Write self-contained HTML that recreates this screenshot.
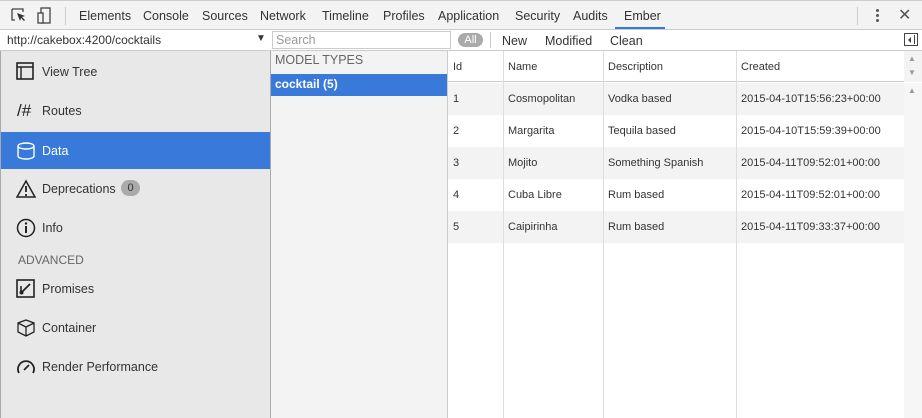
<!DOCTYPE html>
<html><head><style>
*{box-sizing:border-box;margin:0;padding:0}
body{width:922px;height:418px;overflow:hidden;font-family:"Liberation Sans",sans-serif;font-size:12px;color:#333;background:#fff;position:relative}
.abs{position:absolute}
#tabs{left:0;top:0;width:922px;height:30px;background:#f3f3f3;border-top:1px solid #ccc;border-bottom:1px solid #ccc}
#tabs span{position:absolute;top:8px;font-size:12.5px;color:#333}
#bar2{left:0;top:30px;width:922px;height:21px;border-bottom:1px solid #ccc;background:#fff}
#side{left:0;top:51px;width:271px;height:367px;background:#e8e8e8;border-left:1px solid #aaa;border-right:1px solid #aaa}
.nav{position:absolute;left:0;width:269px;height:37px;font-size:12.5px;color:#333}
.nav .t{position:absolute;left:41px;top:12px}
.nav svg{position:absolute;left:15px;top:9px}
#mid{left:271px;top:51px;width:177px;height:367px;background:#f3f3f3;border-right:1px solid #ccc}
#tbl{left:448px;top:51px;width:456px;height:367px;background:#fff}
.row{position:absolute;left:0;width:456px;height:32px}
.row span{position:absolute;top:10px;font-size:11px}
.vl{position:absolute;top:0;width:1px;height:367px;background:#ddd}
</style></head><body>
<div id="tabs" class="abs">
<svg class="abs" style="left:11px;top:7px" width="16" height="15" viewBox="0 0 16 15"><path d="M1 1h11v3M1 1v11h3" fill="none" stroke="#444" stroke-width="1.3"/><path d="M6 5l8 3-3 1 3 3-1 1-3-3-1 3z" fill="#333"/></svg>
<svg class="abs" style="left:37px;top:6px" width="14" height="17" viewBox="0 0 14 17"><rect x="4" y="1" width="9" height="15" fill="none" stroke="#444" stroke-width="1.3"/><rect x="1" y="6" width="5" height="10" fill="#f3f3f3" stroke="#444" stroke-width="1.3"/></svg>
<div class="abs" style="left:65px;top:6px;width:1px;height:18px;background:#ccc"></div>
<span style="left:79px">Elements</span><span style="left:143px">Console</span><span style="left:202px">Sources</span><span style="left:260px">Network</span><span style="left:322px">Timeline</span><span style="left:383px">Profiles</span><span style="left:438px">Application</span><span style="left:515px">Security</span><span style="left:573px">Audits</span><span style="left:624px">Ember</span>
<div class="abs" style="left:615px;top:26px;width:50px;height:2px;background:#3879d9"></div>
<div class="abs" style="left:857px;top:6px;width:1px;height:18px;background:#ccc"></div>
<div class="abs" style="left:876px;top:8px;width:3px;height:3px;background:#555;border-radius:50%;box-shadow:0 5px #555,0 10px #555"></div>
<span style="left:898px;top:4px;font-size:16px;color:#555">✕</span>
</div>
<div id="bar2" class="abs">
<span class="abs" style="left:7px;top:3px;font-size:12px">http://cakebox:4200/cocktails</span>
<span class="abs" style="left:256px;top:3px;font-size:10px">▼</span>
<div class="abs" style="left:272px;top:1px;width:179px;height:18px;border:1px solid #ccc;background:#fff"><span style="position:absolute;left:3px;top:1px;color:#999;font-size:12.5px">Search</span></div>
<div class="abs" style="left:458px;top:3px;width:25px;height:14px;border-radius:7px;background:#aaa;color:#fff;font-size:11px;text-align:center;line-height:14px">All</div>
<div class="abs" style="left:490px;top:2px;width:1px;height:16px;background:#ccc"></div>
<span class="abs" style="left:502px;top:4px;font-size:12.5px">New</span>
<span class="abs" style="left:545px;top:4px;font-size:12.5px">Modified</span>
<span class="abs" style="left:610px;top:4px;font-size:12.5px">Clean</span>
<div class="abs" style="left:904px;top:3px;width:14px;height:13px;border:1px solid #444"><div style="position:absolute;right:2px;top:1px;width:1px;height:9px;background:#444"></div><div style="position:absolute;left:3px;top:3px;border:3px solid transparent;border-right-color:#444;border-left:0"></div></div>
</div>
<div id="side" class="abs">
<div class="nav" style="top:2px"><svg width="18" height="18"><rect x="1" y="1" width="16" height="16" fill="none" stroke="#222" stroke-width="1.6"/><path d="M1 5h16M5 5v12" stroke="#222" stroke-width="1.4"/></svg><span class="t">View Tree</span></div>
<div class="nav" style="top:41px"><span style="position:absolute;left:16px;top:9px;font-size:17px;color:#222">/#</span><span class="t">Routes</span></div>
<div class="nav" style="top:81px;background:#3879d9;color:#fff"><svg width="20" height="20"><ellipse cx="10" cy="5" rx="8" ry="3" fill="none" stroke="#fff" stroke-width="1.4"/><path d="M2 5v10a8 3 0 0 0 16 0V5" fill="none" stroke="#fff" stroke-width="1.4"/></svg><span class="t">Data</span></div>
<div class="nav" style="top:119px"><svg width="20" height="20"><path d="M10 2L1 18h18z" fill="none" stroke="#222" stroke-width="1.5"/><path d="M10 7v6M10 15v2" stroke="#222" stroke-width="1.8"/></svg><span class="t">Deprecations</span><span style="position:absolute;left:120px;top:10px;width:19px;height:16px;border-radius:8px;background:#aaa;text-align:center;line-height:16px;font-size:11px;color:#333">0</span></div>
<div class="nav" style="top:158px"><svg width="20" height="20"><circle cx="10" cy="10" r="8.5" fill="none" stroke="#222" stroke-width="1.5"/><path d="M10 8v7" stroke="#222" stroke-width="2"/><circle cx="10" cy="5.5" r="1.2" fill="#222"/></svg><span class="t">Info</span></div>
<span style="position:absolute;left:17px;top:202px;color:#666;font-size:12px">ADVANCED</span>
<div class="nav" style="top:219px"><svg width="20" height="20"><rect x="1" y="1" width="17" height="17" fill="none" stroke="#222" stroke-width="1.6"/><path d="M5 14l9-9" stroke="#222" stroke-width="1.8"/><path d="M5 7v7" stroke="#222" stroke-width="1.6"/><circle cx="5.5" cy="13.5" r="2" fill="#222"/></svg><span class="t">Promises</span></div>
<div class="nav" style="top:258px"><svg width="20" height="20"><path d="M10 2l8 3v9l-8 4-8-4V5z M2 5l8 4 8-4 M10 9v9" fill="none" stroke="#222" stroke-width="1.3"/></svg><span class="t">Container</span></div>
<div class="nav" style="top:297px"><svg width="20" height="20"><path d="M3 16A8 8 0 1 1 17 16" fill="none" stroke="#222" stroke-width="1.8"/><path d="M8 13l5-5" stroke="#222" stroke-width="1.8"/></svg><span class="t">Render Performance</span></div>
</div>
<div id="mid" class="abs">
<span style="position:absolute;left:4px;top:2px;color:#666;font-size:12.5px">MODEL TYPES</span>
<div style="position:absolute;left:0;top:23px;width:176px;height:22px;background:#3879d9;color:#fff;font-weight:bold;font-size:12px;padding:3px 0 0 4px">cocktail (5)</div>
</div>
<div id="tbl" class="abs">
<div class="row" style="top:0;height:31px;border-bottom:1px solid #ccc"><span style="left:5px;top:10px">Id</span><span style="left:60px;top:10px">Name</span><span style="left:160px;top:10px">Description</span><span style="left:293px;top:10px">Created</span></div>
<div class="row" style="top:32px;background:#f3f3f3"><span style="left:5px">1</span><span style="left:60px">Cosmopolitan</span><span style="left:160px">Vodka based</span><span style="left:293px">2015-04-10T15:56:23+00:00</span></div>
<div class="row" style="top:64px"><span style="left:5px">2</span><span style="left:60px">Margarita</span><span style="left:160px">Tequila based</span><span style="left:293px">2015-04-10T15:59:39+00:00</span></div>
<div class="row" style="top:96px;background:#f3f3f3"><span style="left:5px">3</span><span style="left:60px">Mojito</span><span style="left:160px">Something Spanish</span><span style="left:293px">2015-04-11T09:52:01+00:00</span></div>
<div class="row" style="top:128px"><span style="left:5px">4</span><span style="left:60px">Cuba Libre</span><span style="left:160px">Rum based</span><span style="left:293px">2015-04-11T09:52:01+00:00</span></div>
<div class="row" style="top:160px;background:#f3f3f3"><span style="left:5px">5</span><span style="left:60px">Caipirinha</span><span style="left:160px">Rum based</span><span style="left:293px">2015-04-11T09:33:37+00:00</span></div>
<div class="vl" style="left:55px"></div><div class="vl" style="left:155px"></div><div class="vl" style="left:288px"></div>
</div>
<div class="abs" style="left:904px;top:51px;width:18px;height:31px;background:#f3f3f3"><span style="position:absolute;left:4px;top:3px;font-size:8px;color:#999">▲</span><span style="position:absolute;left:4px;top:17px;font-size:8px;color:#999">▼</span></div>
<div class="abs" style="left:904px;top:83px;width:18px;height:335px;background:#f6f6f6"><span style="position:absolute;left:4px;top:3px;font-size:8px;color:#999">▲</span></div>
</body></html>
